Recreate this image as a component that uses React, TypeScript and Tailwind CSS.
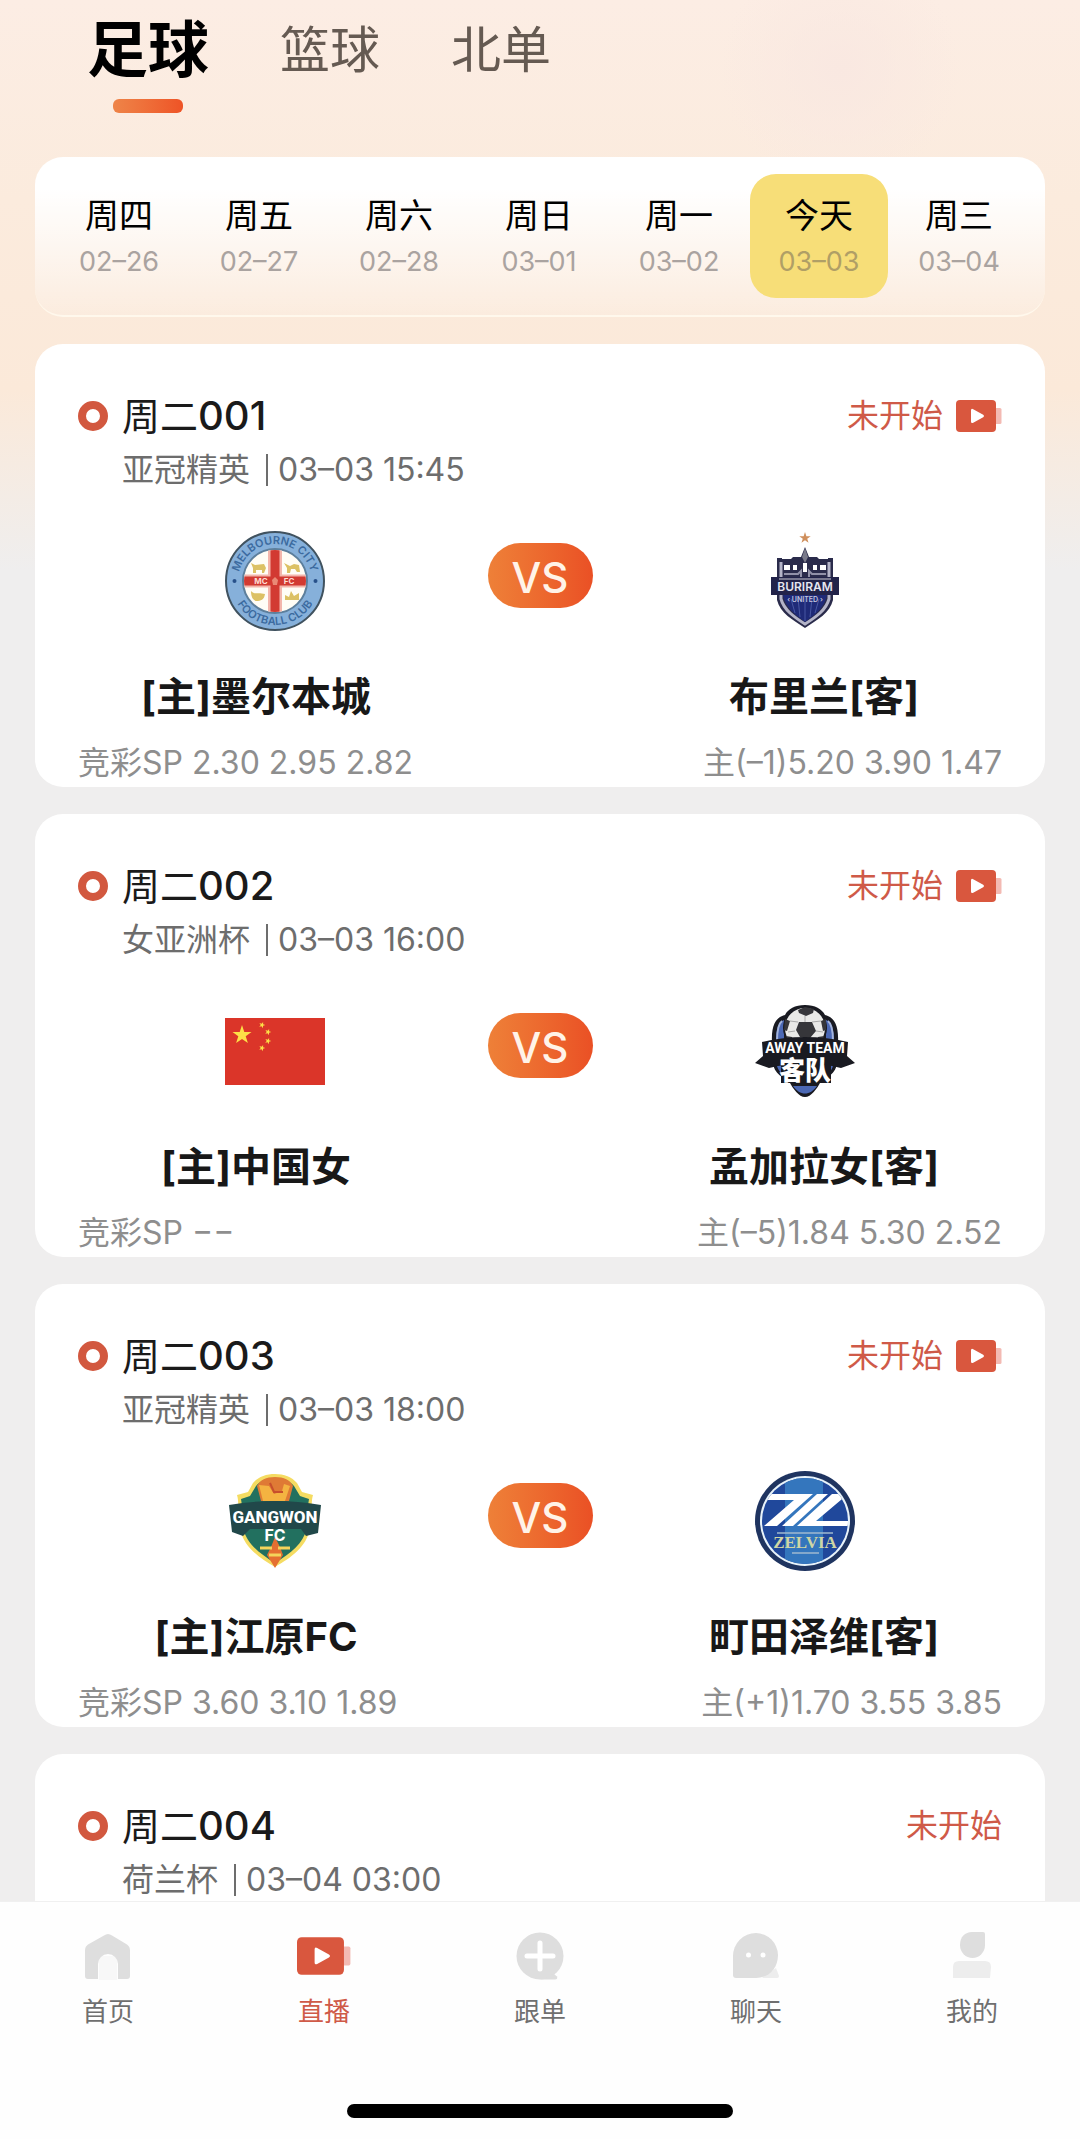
import { useState } from 'react';
import type { ReactNode } from 'react';

interface Team {
  name: string;
  crest: ReactNode;
}

interface Match {
  no: string;
  league: string;
  time: string;
  live?: boolean;
  home?: Team;
  away?: Team;
  sp?: string;
  handicap?: string;
}

const STAR = '0,-10 2.3,-3.1 9.5,-3.1 3.7,1.2 5.9,8.1 0,3.9 -5.9,8.1 -3.7,1.2 -9.5,-3.1 -2.3,-3.1';

function MelbourneCrest() {
  return (
    <svg viewBox="0 0 100 100" className="size-[100px]" role="img" aria-label="墨尔本城">
      <defs>
        <path id="mc-top" d="M13 50a37 37 0 0 1 74 0" />
        <path id="mc-bottom" d="M6 50a44 44 0 0 0 88 0" />
        <clipPath id="mc-clip">
          <circle cx="50" cy="50" r="31" />
        </clipPath>
      </defs>
      <circle cx="50" cy="50" r="49" fill="#86b0da" stroke="#40525f" strokeWidth="2" />
      <circle cx="50" cy="50" r="32" fill="#fffdf6" stroke="#5d7f9c" strokeWidth="2" />
      <g clipPath="url(#mc-clip)">
        <path d="M43 18h14v64H43zM18 43.500h64v13H18z" fill="#f3b6ac" />
        <path d="M45.500 18h9v64h-9zM18 45.500h64v9H18z" fill="#d23a32" />
        <g fill="#dcc164">
          <path d="M26 32l4 2 9-1 2 4-2 5h-2v-3h-6v3h-3v-5z" />
          <path d="M59 32l6 3 4-2 5 1 1 7h-3l-2-3h-4l-1 4h-3v-5z" />
          <path d="M26 60c3 4 7 1 14 3-1 6-4 7-9 7-3-1-5-4-5-10z" />
          <path d="M60 69v-5l4 2 2-6 3 5 5-3v7z" />
        </g>
        <path d="M50 46l3 3-1 5h-4l-1-5z" fill="#e98a76" />
      </g>
      <text x="36" y="53" textAnchor="middle" fontSize="8" fontWeight="700" fill="#ffdcd2">MC</text>
      <text x="64" y="53" textAnchor="middle" fontSize="8" fontWeight="700" fill="#ffdcd2">FC</text>
      <g fontSize="11" fontWeight="600" fill="#3b6a9f" textAnchor="middle">
        <text>
          <textPath href="#mc-top" startOffset="50%">MELBOURNE CITY</textPath>
        </text>
        <text>
          <textPath href="#mc-bottom" startOffset="50%">FOOTBALL CLUB</textPath>
        </text>
      </g>
      <circle cx="9.500" cy="50" r="2" fill="#28518a" />
      <circle cx="90.500" cy="50" r="2" fill="#28518a" />
    </svg>
  );
}

function BuriramCrest() {
  return (
    <svg viewBox="0 0 100 100" className="size-[100px]" role="img" aria-label="布里兰">
      <polygon points={STAR} fill="#cf8f5c" transform="translate(50 7) scale(.6)" />
      <path d="M50 16l4 10h8l2 2h9v-1h5v42c-3 13-16 20-28 28-12-8-25-15-28-28V27h5v1h9l2-2h8z" fill="#2a2b4b" />
      <path d="M26 31v37c3 11 13 18 24 25 11-7 21-14 24-25V31" fill="none" stroke="#b4b4c8" strokeWidth="3" />
      <path d="M28 64h44c-2 12-12 20-22 27-10-7-20-15-22-27z" fill="#1f2a78" />
      <path d="M50 66v24M43 67l2 19M57 67l-2 19M36 68l4 14M64 68l-4 14" stroke="#4857a2" strokeWidth="1" />
      <path d="M29 34h6v5h-6zM38 34h4v5h-4zM48 32h4v9h-4zM58 34h4v5h-4zM65 34h6v5h-6z" fill="#fff" />
      <path d="M29 43h14l3-3v8h8v-8l3 3h14" fill="none" stroke="#9191a8" strokeWidth="2" />
      <path d="M50 17l3 9-3 6-3-6z" fill="#797a8a" />
      <path d="M16 46h68v18H16z" fill="#22234a" />
      <path d="M24 48h52" stroke="#77778e" strokeWidth="2" />
      <text x="50" y="60" textAnchor="middle" fontSize="12" fontWeight="600" fill="#e6e6f0">BURIRAM</text>
      <text x="50" y="71" textAnchor="middle" fontSize="7" fontWeight="600" fill="#c3c5df">‹ UNITED ›</text>
    </svg>
  );
}

function ChinaFlag() {
  const small = [[37, 7], [43, 14], [43, 23], [37, 30]];
  return (
    <svg viewBox="0 0 100 67" className="h-[67px] w-[100px]" role="img" aria-label="中国">
      <path d="M0 0h100v67H0z" fill="#db3529" />
      <g fill="#fde047">
        <polygon points={STAR} transform="translate(17 17)" />
        {small.map(([x, y]) => (
          <polygon key={`${x}-${y}`} points={STAR} transform={`translate(${x} ${y}) rotate(20) scale(.33)`} />
        ))}
      </g>
    </svg>
  );
}

function AwayCrest() {
  return (
    <svg viewBox="0 0 100 100" className="size-[100px]" role="img" aria-label="客队">
      <path d="M50 4c10 0 17 4 20 10 9 2 14 10 13 28v14c0 14-8 20-17 24-4 8-10 16-16 16s-12-8-16-16c-9-4-17-10-17-24V42c-1-18 4-26 13-28C33 8 40 4 50 4z" fill="#191a21" />
      <path d="M29 19c-6 2-8 10-8 22h8zM71 19c6 2 8 10 8 22h-8zM21 60c1 9 5 13 11 16V60zM79 60c-1 9-5 13-11 16V60zM38 85h24c-7 10-17 10-24 0z" fill="#4b68b4" />
      <path d="M27 20c-4 3-5 9-5 20M73 20c4 3 5 9 5 20" fill="none" stroke="#a5b5dc" strokeWidth="2" />
      <circle cx="50" cy="27" r="21" fill="#e9e9e7" stroke="#191a21" strokeWidth="2" />
      <path d="M43 9l7-3 9 2-1 4-7 3-7-3zM44 21h13l4 9-6 7-10-1-4-7zM30 18l5 2-3 10-3-1zM71 18l-5 2 2 10 3-1zM31 35l6 1 4 8-6-1zM69 35l-6 1-3 8 6-1z" fill="#36363a" />
      <path d="M43 21L35 20M50 15v6M57 21l9-1M40 30l-7 1M61 30l7 1" stroke="#aaa" strokeWidth="1" />
      <path d="M7 41q43-10 86 0l-1 14 8 7-14 5q-36-9-72 0L0 62l8-7z" fill="#191a21" />
      <text
        x="50"
        y="52"
        textAnchor="middle"
        fontSize="14"
        fontWeight="700"
        fill="#fff"
        fontFamily="Roboto, sans-serif"
      >
        AWAY TEAM
      </text>
      <path d="M26 54h50v28H26z" fill="#191a21" />
      <text x="50" y="79" textAnchor="middle" fontSize="26" fontWeight="900" fill="#fff">客队</text>
    </svg>
  );
}

function GangwonCrest() {
  return (
    <svg viewBox="0 0 100 100" className="size-[100px]" role="img" aria-label="江原FC">
      <path d="M50 3c9 0 17 3 22 9l5 9 11 3c-3 10 1 18-3 34-4 18-18 28-35 38-17-10-31-20-35-38-4-16 0-24-3-34l11-3 5-9C33 6 41 3 50 3z" fill="#f5dc62" />
      <path d="M50 7c9 0 15 3 19 8l6 10 9 3c-2 9 1 16-2 29-4 16-16 25-32 35-16-10-28-19-32-35-3-13 0-20-2-29l9-3 6-10c4-5 10-8 19-8z" fill="#22705f" />
      <path d="M50 6c9 0 15 3 18 9l-4 15H36l-4-15c3-6 9-9 18-9z" fill="#df7a35" />
      <path d="M34 14l10 1 5 8 8-3 2-7 6 2-5 15H38l-2-8z" fill="#f4b341" />
      <path d="M45 12l4 9h9" fill="none" stroke="#c74f2c" strokeWidth="2" />
      <path d="M4 34q46-8 92 0l-3 28-12 3-5-7H25l-7 7-11-4z" fill="#21484a" />
      <path d="M50 66l5 10 3 8-8 13-8-13 4-8z" fill="#e56f31" />
      <text
        x="50"
        y="52"
        textAnchor="middle"
        fontSize="17"
        fontWeight="800"
        fill="#fff"
        fontFamily="Roboto, sans-serif"
      >
        GANGWON
      </text>
      <text x="50" y="70" textAnchor="middle" fontSize="16" fontWeight="700" fill="#fff">FC</text>
      <path d="M35 77h12M53 77h12M44 84h12" stroke="#f4d45b" strokeWidth="3" />
    </svg>
  );
}

function ZelviaCrest() {
  return (
    <svg viewBox="0 0 100 100" className="size-[100px]" role="img" aria-label="町田泽维">
      <defs>
        <clipPath id="zv-clip">
          <circle cx="50" cy="50" r="43" />
        </clipPath>
      </defs>
      <circle cx="50" cy="50" r="50" fill="#1f3460" />
      <circle cx="50" cy="50" r="45" fill="#e8f3fa" />
      <g clipPath="url(#zv-clip)">
        <path d="M5 5h90v90H5z" fill="#20489b" />
        <path d="M30 5h38v90H30z" fill="#3476bd" />
        <path d="M12 23h46L22 55H9l30-26H12zM62 23h11L38 55H27zM77 23h16L61 50h33v5H42z" fill="#fff" />
      </g>
      <text
        x="50"
        y="77"
        textAnchor="middle"
        fontSize="17"
        fontWeight="700"
        fill="#cfd6a4"
        fontFamily="Liberation Serif, serif"
      >
        ZELVIA
      </text>
      <path d="M22 62h56M37 82h27" stroke="#9fb9cf" strokeWidth="1.500" />
    </svg>
  );
}

function LiveIcon({ className }: { className: string }) {
  return (
    <svg viewBox="0 0 46 32" className={className} aria-hidden="true">
      <path d="M39 8h5q1.500 0 1.500 1.500v13q0 1.500-1.500 1.500h-5z" fill="#f3bab3" />
      <rect width="40" height="32" rx="4" fill="#d9573e" />
      <path d="M15 10.500q0-2.500 2.200-1.300l10 5.500q1.800 1.300 0 2.500l-10 5.600q-2.200 1-2.200-1.300z" fill="#fff" />
    </svg>
  );
}

function HomeIcon() {
  return (
    <svg viewBox="0 0 48 48" className="size-12" aria-hidden="true">
      <path d="M15 24h18v24H15z" fill="#f8f8f8" />
      <path d="M20 3.500q4-3 8 0l15 9q3 2 3 6V44q0 3-3 3h-9V32a10 10 0 0 0-20 0v15H4q-3 0-3-3V18.500q0-4 3-6z" fill="#dedede" />
    </svg>
  );
}

function FollowIcon() {
  return (
    <svg viewBox="0 0 48 48" className="size-12" aria-hidden="true">
      <circle cx="24" cy="24" r="23.500" fill="#dedede" />
      <path d="M24 47.500L38 42l3 2.500q1 3-2 3z" fill="#dedede" />
      <path d="M24 11v26M11 24h26" stroke="#fff" strokeWidth="5" strokeLinecap="round" />
    </svg>
  );
}

function ChatIcon() {
  return (
    <svg viewBox="0 0 48 48" className="size-12" aria-hidden="true">
      <path d="M30 46l14-10 3 8q0 2-2 2z" fill="#ededed" />
      <path d="M24 1a22.500 22.500 0 0 1 22 22c0 13-9 23-22 23H4q-3 0-3-3V24A23 23 0 0 1 24 1z" fill="#dedede" />
      <circle cx="16.500" cy="23" r="2.500" fill="#fff" />
      <circle cx="31" cy="23" r="2.500" fill="#fff" />
    </svg>
  );
}

function UserIcon() {
  return (
    <svg viewBox="0 0 48 48" className="size-12" aria-hidden="true">
      <path d="M24 0h11q2 0 2 2v11a12.500 13 0 0 1-25 0C12 5 17 0 24 0z" fill="#dedede" />
      <path d="M11 29h26q6 0 6 6l-1 11H5V35q0-6 6-6z" fill="#ededed" />
    </svg>
  );
}

const TABS = ['足球', '篮球', '北单'];

const DAYS = [
  { label: '周四', date: '02–26' },
  { label: '周五', date: '02–27' },
  { label: '周六', date: '02–28' },
  { label: '周日', date: '03–01' },
  { label: '周一', date: '03–02' },
  { label: '今天', date: '03–03' },
  { label: '周三', date: '03–04' },
];

const MATCHES: Match[] = [
  {
    no: '001',
    league: '亚冠精英',
    time: '03–03 15:45',
    live: true,
    home: { name: '墨尔本城', crest: <MelbourneCrest /> },
    away: { name: '布里兰', crest: <BuriramCrest /> },
    sp: '2.30 2.95 2.82',
    handicap: '主(–1)5.20 3.90 1.47',
  },
  {
    no: '002',
    league: '女亚洲杯',
    time: '03–03 16:00',
    live: true,
    home: { name: '中国女', crest: <ChinaFlag /> },
    away: { name: '孟加拉女', crest: <AwayCrest /> },
    sp: '−−',
    handicap: '主(–5)1.84 5.30 2.52',
  },
  {
    no: '003',
    league: '亚冠精英',
    time: '03–03 18:00',
    live: true,
    home: { name: '江原FC', crest: <GangwonCrest /> },
    away: { name: '町田泽维', crest: <ZelviaCrest /> },
    sp: '3.60 3.10 1.89',
    handicap: '主(+1)1.70 3.55 3.85',
  },
  { no: '004', league: '荷兰杯', time: '03–04 03:00' },
];

const NAV = [
  { label: '首页', icon: <HomeIcon /> },
  { label: '直播', icon: <LiveIcon className="h-[38px] w-[54px]" />, active: true },
  { label: '跟单', icon: <FollowIcon /> },
  { label: '聊天', icon: <ChatIcon /> },
  { label: '我的', icon: <UserIcon /> },
];

function MatchCard({ match }: { match: Match }) {
  return (
    <article className="min-h-[443px] shrink-0 rounded-[28px] bg-white px-[43px] pt-12 pb-1">
      <div className="flex h-12 items-center justify-between">
        <div className="flex items-center gap-[14px]">
          <span className="size-[30px] rounded-full border-8 border-[#d2583f]" />
          <h2 className="text-[38px] leading-[48px] text-[#1a1a1a]">
            周二<span className="text-[40px] font-medium">{match.no}</span>
          </h2>
        </div>
        <div className="flex items-center gap-[13px] text-[32px] leading-10 text-[#cf5a48]">
          <span>未开始</span>
          {match.live && <LiveIcon className="h-8 w-[46px]" />}
        </div>
      </div>
      <p className="mt-[10px] flex items-center pl-11 text-[32px] leading-10 text-[#6d6d6d]">
        {match.league}
        <span className="mr-[10px] ml-4 h-8 w-[2px] bg-[#6d6d6d]" />
        {match.time}
      </p>

      {match.home && match.away && (
        <>
          <div className="mt-[41px] grid h-[100px] grid-cols-[1fr_136px_1fr] items-center justify-items-center">
            {match.home.crest}
            <span className="mt-3 flex h-[65px] w-[105px] items-center justify-center self-start rounded-full bg-linear-to-r from-[#ee8038] to-[#ea5025] pt-1 text-[42px] font-medium text-[#fff3e8]">
              VS
            </span>
            {match.away.crest}
          </div>
          <div className="mt-[42px] grid grid-cols-2 gap-x-[212px] text-center text-[40px] leading-[48px] font-bold whitespace-nowrap text-[#181818]">
            <span>[主]{match.home.name}</span>
            <span>{match.away.name}[客]</span>
          </div>
          <div className="mt-[22px] flex justify-between text-[32px] leading-10 text-[#8e8e8e]">
            <span>竞彩SP {match.sp}</span>
            <span>{match.handicap}</span>
          </div>
        </>
      )}
    </article>
  );
}

export default function App() {
  const [tab, setTab] = useState('足球');
  const [day, setDay] = useState('03–03');

  return (
    <div className="flex h-screen flex-col bg-[#efeeee] bg-[radial-gradient(circle_at_840px_70px,#f9e8e1_0,#f9e8e100_120px),linear-gradient(#fcede4_0,#fbebdd_200px,#fbe9d9_390px,#efeeee_570px)] font-['Inter','Noto_Sans_CJK_SC',sans-serif]">
      <header className="flex items-start gap-[71px] pt-[14px] pl-[87px]">
        {TABS.map((name) => (
          <button key={name} type="button" onClick={() => setTab(name)} className="flex flex-col items-center">
            <span
              className={
                name === tab
                  ? 'text-[61px] leading-[72px] font-bold text-black'
                  : 'text-[50px] leading-[72px] text-[#655a52]'
              }
            >
              {name}
            </span>
            {name === tab && (
              <span className="mt-[13px] h-[14px] w-[70px] rounded-md bg-linear-to-r from-[#ee8448] to-[#ee5326]" />
            )}
          </button>
        ))}
      </header>

      <main className="flex flex-1 flex-col gap-[27px] overflow-y-auto px-[35px] pt-11 [scrollbar-width:none]">
        <div className="grid shrink-0 grid-cols-7 rounded-[28px] border-b-2 border-[#fff8ec] bg-linear-to-b from-white from-20% to-white/10 pt-[17px] pr-4 pb-[17px] pl-[14px]">
          {DAYS.map((d) => (
            <button
              key={d.date}
              type="button"
              onClick={() => setDay(d.date)}
              className={`mx-px flex flex-col items-center gap-[10px] rounded-[26px] pt-[22px] pb-5 ${d.date === day ? 'bg-[#f7de78]' : ''}`}
            >
              <span className="text-[34px] leading-10 text-black">{d.label}</span>
              <span className={`text-[27px] leading-8 ${d.date === day ? 'text-[#b09f66]' : 'text-[#aaa3a0]'}`}>
                {d.date}
              </span>
            </button>
          ))}
        </div>

        {MATCHES.map((m) => (
          <MatchCard key={m.no} match={m} />
        ))}
      </main>

      <nav className="border-t border-[#f0f0f0] bg-[#fefefe] pt-[30px] pb-[21px]">
        <div className="grid grid-cols-5">
          {NAV.map((item) => (
            <a key={item.label} href="#" className="flex flex-col items-center gap-4">
              <span className="flex h-12 items-center">{item.icon}</span>
              <span className={`text-[26px] leading-8 ${item.active ? 'text-[#cf5a48]' : 'text-[#6f6f6f]'}`}>
                {item.label}
              </span>
            </a>
          ))}
        </div>
        <div className="mx-auto mt-[76px] h-[14px] w-[386px] rounded-full bg-black" />
      </nav>
    </div>
  );
}
